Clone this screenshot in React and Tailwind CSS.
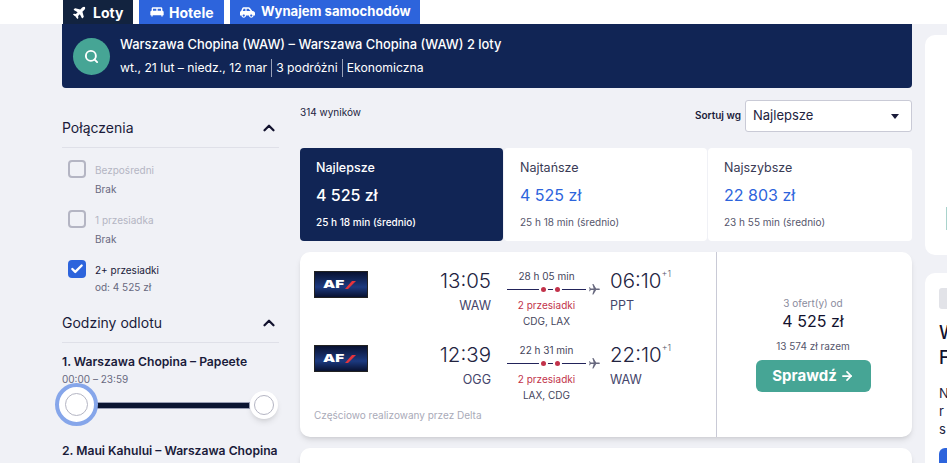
import React from 'react'
import { Search, ChevronUp, Check, ArrowRight } from 'lucide-react'
import { FaPlane, FaCarSide } from 'react-icons/fa'
import { MdKingBed, MdFlight } from 'react-icons/md'

const FONT = { fontFamily: 'Inter, sans-serif' }

function Tab({ active, icon, label, className }) {
  return (
    <div className={`h-6 flex items-center whitespace-nowrap font-bold text-white ${active ? 'bg-[#12233f]' : 'bg-[#2d64dc]'} ${className}`}>
      {icon}
      <span>{label}</span>
    </div>
  )
}

function Option({ label, sub, checked, muted }) {
  return (
    <div className="flex gap-[9px] pl-[6px] h-[50px]">
      <div className={`w-[18px] h-[18px] rounded-[4px] flex items-center justify-center ${checked ? 'bg-[#2d64dc]' : 'border-2 border-[#b4b5c3]'}`}>
        {checked && <Check className="w-3.5 h-3.5 text-white" strokeWidth={4} />}
      </div>
      <div className="text-[10px] leading-[19px] pt-px">
        <div className={muted ? 'text-[#b4b5c3]' : 'text-[#1a1b3a]'}>{label}</div>
        <div className={`text-[#68697f] ${checked ? '-mt-[2px]' : ''}`}>{sub}</div>
      </div>
    </div>
  )
}

function SectionTitle({ children }) {
  return (
    <div className="flex items-start justify-between h-[33px] pt-[3px] border-b border-[#dfe0e8] pr-px">
      <span className="text-[14px] leading-[20px] text-[#1a1b3a]">{children}</span>
      <ChevronUp className="w-[18px] h-[18px] mt-px text-[#12122e]" strokeWidth={3} />
    </div>
  )
}

function SortTab({ active, title, price, time, className }) {
  return (
    <div className={`h-[93px] pl-4 pt-[12px] rounded-[4px] ${active ? 'bg-[#112555]' : 'bg-white'} ${className}`}>
      <div className={`text-[12.5px] leading-[16px] ${active ? 'text-white font-medium' : 'text-[#3a3b55]'}`}>{title}</div>
      <div className={`text-[16px] leading-[22px] mt-[8px] ${active ? 'text-white font-medium' : 'text-[#2d64dc]'}`}>{price}</div>
      <div className={`text-[10px] leading-[14px] mt-[9px] ${active ? 'text-white font-medium' : 'text-[#55566c]'}`}>{time}</div>
    </div>
  )
}

function AfLogo() {
  return (
    <div className="w-[54px] h-[27px] bg-[linear-gradient(#081130,#1c3a80_60%,#081130)] border border-[#222] flex items-center justify-center">
      <span className="text-white text-[11px] font-black leading-none scale-x-[1.4] mr-[3px]">AF</span>
      <svg width="11" height="8" viewBox="0 0 11 8"><path d="M7 0h4L3 8H0z" fill="#e4343c" /></svg>
    </div>
  )
}

function Leg({ dep, from, dur, arr, to, via, plus }) {
  return (
    <div className="flex h-[74px]">
      <div className="w-[54px] pt-[3px]"><AfLogo /></div>
      <div className="w-[123px] text-right">
        <div className="text-[20.5px] leading-[26px] font-light text-[#22233f]">{dep}</div>
        <div className="text-[12.5px] leading-[20px] mt-[2px] text-[#44456a]">{from}</div>
      </div>
      <div className="w-[94px] ml-[16px] flex flex-col items-start">
        <div className="w-[79px] text-center text-[10px] leading-[14px] mt-px text-[#44455c]">{dur}</div>
        <div className="flex items-center h-[12px]">
          <div className="w-[79px] h-px bg-[#22235a] relative">
            <span className="absolute left-[34px] -top-[2px] w-[5px] h-[5px] bg-[#c2324a] rounded-full ring-2 ring-white" />
            <span className="absolute left-[48px] -top-[2px] w-[5px] h-[5px] bg-[#c2324a] rounded-full ring-2 ring-white" />
          </div>
          <MdFlight className="w-[13px] h-[13px] ml-[2px] text-[#68697f] rotate-90" />
        </div>
        <div className="w-[79px] text-center text-[10px] leading-[14px] mt-[3px] text-[#c2324a]">2 przesiadki</div>
        <div className="w-[79px] text-center text-[10px] leading-[14px] mt-[2px] text-[#44455c]">{via}</div>
      </div>
      <div className="ml-[9px]">
        <div className="text-[20.5px] leading-[26px] font-light text-[#22233f] whitespace-nowrap">{arr}<sup className="text-[9px] text-[#55566c] align-[7px]">{plus}</sup></div>
        <div className="text-[12.5px] leading-[20px] mt-[2px] text-[#44456a]">{to}</div>
      </div>
    </div>
  )
}

export default function App() {
  return (
    <div style={FONT} className="w-[947px] h-[463px] overflow-hidden bg-[#f0f1f6] flex flex-col">
      <div className="h-6 bg-white shrink-0 flex pl-[63px] gap-[6px]">
        <Tab active className="w-[70px] pl-[10px] gap-[6px] text-[14px]" label="Loty" icon={<FaPlane className="w-[14px] h-[14px] -rotate-45" />} />
        <Tab className="w-[85px] pl-[10px] gap-[4px] text-[14px]" label="Hotele" icon={<MdKingBed className="w-[16px] h-[16px]" />} />
        <Tab className="w-[190px] pl-[10px] gap-[6px] text-[13.1px]" label="Wynajem samochodów" icon={<FaCarSide className="w-[15px] h-[15px]" />} />
      </div>
      <div className="flex flex-1 pl-[62px] gap-[13px] items-start">
        <div className="w-[850px] shrink-0">
          <div className="h-[64px] bg-[#112555] rounded-b-[4px] flex items-center pl-[11px] gap-[10px] text-white">
            <div className="w-[37px] h-[37px] rounded-full bg-[#46a595] flex items-center justify-center">
              <Search className="w-[15px] h-[15px] text-white" strokeWidth={3} />
            </div>
            <div>
              <div className="text-[12.9px] leading-[18px] font-medium">Warszawa Chopina (WAW) – Warszawa Chopina (WAW) 2 loty</div>
              <div className="flex items-center text-[12.2px] leading-[18px] mt-[5px]">
                <span className="pr-1 border-r border-[#9aa2b8]">wt., 21 lut – niedz., 12 mar</span>
                <span className="px-1 border-r border-[#9aa2b8]">3 podróżni</span>
                <span className="pl-1">Ekonomiczna</span>
              </div>
            </div>
          </div>
          <div className="flex">
            <div className="w-[217px] shrink-0 pt-[27px]">
              <SectionTitle>Połączenia</SectionTitle>
              <div className="mt-[12px]">
                <Option muted label="Bezpośredni" sub="Brak" />
                <Option muted label="1 przesiadka" sub="Brak" />
                <Option checked label="2+ przesiadki" sub="od: 4 525 zł" />
              </div>
              <SectionTitle>Godziny odlotu</SectionTitle>
              <div className="mt-[11px] text-[12.15px] leading-[16px] font-semibold text-[#1a1b3a] whitespace-nowrap">1. Warszawa Chopina – Papeete</div>
              <div className="text-[10px] leading-[14px] text-[#68697f] mt-[2px]">00:00 – 23:59</div>
              <div className="relative h-[40px] -mt-px mb-[18px]">
                <div className="absolute left-[31px] right-[29px] top-[17px] h-[7px] bg-[#0b1532] border border-[#9a9fb5]" />
                <div className="absolute left-[-7px] top-[-2px] w-[43px] h-[43px] rounded-full border-[4px] border-[#86a6ea] bg-white flex items-center justify-center">
                  <div className="w-[23px] h-[23px] rounded-full border border-[#b4b5c3]" />
                </div>
                <div className="absolute left-[188px] top-[6px] w-[28px] h-[28px] rounded-full bg-white shadow-md flex items-center justify-center">
                  <div className="w-5 h-5 rounded-full border border-[#b4b5c3]" />
                </div>
              </div>
              <div className="text-[12.15px] leading-[16px] font-semibold text-[#1a1b3a] whitespace-nowrap">2. Maui Kahului – Warszawa Chopina</div>
            </div>
            <div className="w-[612px] ml-[21px] shrink-0">
              <div className="flex justify-between h-[60px] pt-[12px]">
                <span className="text-[10px] leading-[14px] text-[#22233f] pt-[5px]">314 wyników</span>
                <div className="flex items-start gap-[4px]">
                  <span className="text-[10px] font-semibold leading-[31px] text-[#1a1b3a]">Sortuj wg</span>
                  <div className="w-[167px] h-[32px] bg-white border border-[#c9cad6] rounded-[3px] flex items-center justify-between pl-[7px] pr-[12px] text-[13px] text-[#22233f]">
                    Najlepsze
                    <span className="w-0 h-0 border-x-[4px] border-x-transparent border-t-[5px] border-t-[#1a1b3a]" />
                  </div>
                </div>
              </div>
              <div className="flex gap-px">
                <SortTab active className="w-[203px]" title="Najlepsze" price="4 525 zł" time="25 h 18 min (średnio)" />
                <SortTab className="w-[203px]" title="Najtańsze" price="4 525 zł" time="25 h 18 min (średnio)" />
                <SortTab className="flex-1" title="Najszybsze" price="22 803 zł" time="23 h 55 min (średnio)" />
              </div>
              <div className="mt-[11px] h-[185px] bg-white rounded-[10px] shadow-md flex">
                <div className="w-[417px] border-r border-[#c9cad6] pl-[14px] pt-[16px]">
                  <Leg dep="13:05" from="WAW" dur="28 h 05 min" arr="06:10" to="PPT" via="CDG, LAX" plus="+1" />
                  <Leg dep="12:39" from="OGG" dur="22 h 31 min" arr="22:10" to="WAW" via="LAX, CDG" plus="+1" />
                  <div className="-mt-[8px] text-[10px] leading-[14px] text-[#a9aab8]">Częściowo realizowany przez Delta</div>
                </div>
                <div className="flex-1 flex flex-col items-center pt-[44px] pr-[3px]">
                  <div className="text-[10px] leading-[14px] text-[#8a8b9d]">3 ofert(y) od</div>
                  <div className="text-[16px] leading-[22px] text-[#12122e]">4 525 zł</div>
                  <div className="text-[10px] leading-[14px] text-[#55566c] mt-[7px]">13 574 zł razem</div>
                  <div className="mt-[7px] w-[115px] h-[32px] rounded-[6px] bg-[#46a595] text-white text-[15px] font-bold flex items-center justify-center gap-[3px]">
                    Sprawdź <ArrowRight className="w-[14px] h-[14px]" strokeWidth={3} />
                  </div>
                </div>
              </div>
              <div className="mt-[11px] h-[40px] bg-white rounded-[10px] shadow-md" />
            </div>
          </div>
        </div>
        <div className="w-[40px] shrink-0 flex flex-col gap-[18px] pt-[11px]">
          <div className="h-[220px] bg-white rounded-l-[10px] flex flex-col justify-end pb-[25px]">
            <div className="ml-[21px] w-px h-[23px] bg-[#a9d3cc]" />
          </div>
          <div className="h-[200px] bg-white rounded-l-[10px] pl-[14px] pt-[15px] text-[#12122e]">
            <div className="w-8 h-[21px] bg-[#e2e3e8] rounded-[3px]" />
            <div className="text-[18px] leading-[25px] mt-[11px] font-medium">W<br />F</div>
            <div className="text-[13px] leading-[18px] mt-[14px] text-[#22233f]">N<br />r<br />s</div>
            <div className="w-8 h-8 mt-[10px] bg-[#2d64dc] rounded-[6px]" />
          </div>
        </div>
      </div>
    </div>
  )
}
